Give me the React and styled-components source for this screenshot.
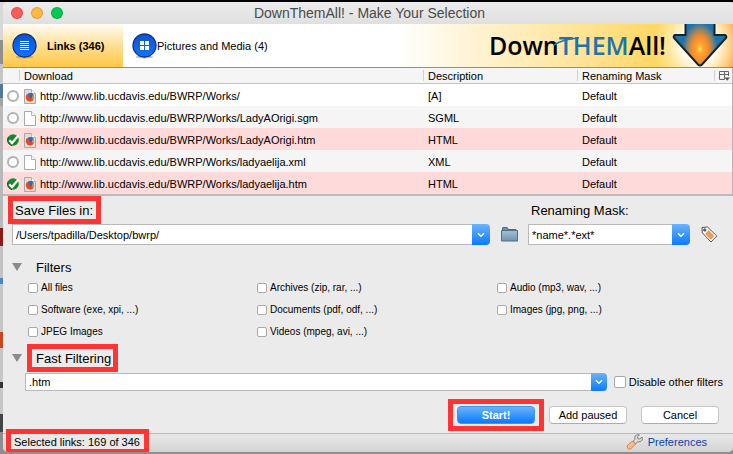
import React, { useState } from 'react';
import styled, { createGlobalStyle, css } from 'styled-components';

const GlobalStyle = createGlobalStyle`
  * {
    box-sizing: border-box;
  }
  body {
    margin: 0;
    background: #8e8e8e;
    font-family: "Liberation Sans", Arial, sans-serif;
    font-size: 11px;
    line-height: 16px;
    color: #000;
  }
  input,
  button {
    margin: 0;
    font: inherit;
    color: inherit;
  }
`;

const Desktop = styled.div`
  padding: 0 0 2px 3px;
  border-top: 2px solid #000;
  background: linear-gradient(
    #d8d8d8 0 38px, #8f8f8f 38px 62px, #c6c6c6 62px 82px, #55789a 82px 96px,
    #a4a4a4 96px 104px, #b9b9b9 104px 226px, #8b1a1a 226px 244px, #c2c2c2 244px 276px,
    #4c86c4 276px 282px, #c6c6c6 282px 330px, #c8471c 330px 346px, #c6c6c6 346px 380px,
    #333 380px 386px, #c6c6c6 386px 412px, #444 412px 430px, #8e8e8e 430px
  );
`;

const Window = styled.main`
  background: #ebebeb;
  border-radius: 5px;
  overflow: hidden;
`;

const TitleBar = styled.header`
  display: grid;
  grid-template-columns: 1fr auto 1fr;
  align-items: center;
  height: 22px;
  padding: 0 5px 0 8px;
  background: linear-gradient(#ececec, #e0e0e0);
`;

const Title = styled.h1`
  margin: 0;
  font-size: 14px;
  font-weight: 400;
  color: #4a4a4a;
`;

const Lights = styled.div`
  display: flex;
  gap: 8px;
`;

const Light = styled.button`
  width: 12px;
  height: 12px;
  padding: 0;
  border: 1px solid rgba(0, 0, 0, 0.12);
  border-radius: 50%;
  background: ${({ $color }) => $color};
`;

const TabBar = styled.div`
  display: flex;
  height: 44px;
  border-bottom: 1px solid #8f8f8f;
  background: #fff;
`;

const Tab = styled.button`
  display: flex;
  align-items: center;
  gap: ${({ $active }) => ($active ? '10px' : '0')};
  width: ${({ $active }) => ($active ? '120px' : 'auto')};
  padding: 0 9px;
  border: 0;
  background: transparent;
  white-space: nowrap;
  ${({ $active }) => $active && css`
    background: linear-gradient(#fffdf6, #ffdf94 50%, #ffc845);
    font-weight: 700;
  `}
`;

const Banner = styled.div`
  flex: 1;
  display: flex;
  justify-content: flex-end;
  align-items: center;
  gap: 6px;
  padding-right: 5px;
  background:
    radial-gradient(ellipse 46px 50px at calc(100% - 34px) 20px, #fffbe8 40%, rgba(255, 240, 190, 0.7) 65%, transparent),
    linear-gradient(to left, #ff8f22 0, #ffb03a 20px, transparent 60px),
    linear-gradient(to right, #fff 26%, #fff2cf 45%, #ffe394 68%, #ffd352 88%);
`;

const Logo = styled.strong`
  position: relative;
  font: 600 25px/43px "Open Sans", sans-serif;
  em {
    font-style: normal;
    color: #1a75b0;
  }
`;

const Swash = styled.svg`
  position: absolute;
  left: 64px;
  top: 12px;
`;

const LinkTable = styled.table`
  width: 100%;
  table-layout: fixed;
  border-collapse: separate;
  border-spacing: 0;
  background: #fff;
  border-right: 1px solid #b5b5b5;
  border-bottom: 2px solid #b9bbbc;
`;

const HeadCell = styled.th`
  width: ${({ $width }) => $width};
  height: 16px;
  padding: 1px 0 0 4px;
  border-bottom: 1px solid #c4c4c4;
  background: linear-gradient(to bottom, #d0d0d0, #d0d0d0) 100% 50% / 1px 11px no-repeat #f5f5f5;
  font-weight: 400;
  text-align: left;
  line-height: 14px;
  &:last-child {
    background: #f5f5f5;
  }
  svg {
    display: block;
  }
`;

const Row = styled.tr`
  height: 22px;
  background: ${({ $checked }) => ($checked ? '#ffdada' : '#fff')};
  &:nth-child(even) {
    background: ${({ $checked }) => ($checked ? '#ffdada' : '#f5f5f5')};
  }
`;

const Cell = styled.td`
  padding: 2px 0 0 4px;
  line-height: 20px;
  white-space: nowrap;
`;

const NameCell = styled.div`
  display: flex;
  align-items: center;
  gap: 4px;
`;

const Mark = styled.label`
  display: grid;
  place-items: center;
  width: 12px;
  height: 12px;
  > * {
    grid-area: 1 / 1;
  }
  svg {
    pointer-events: none;
  }
`;

const RoundCheck = styled.input`
  appearance: none;
  width: 12px;
  height: 12px;
  border: 2px solid #b2b2b2;
  border-radius: 50%;
  background: #fff;
  &:checked {
    border-color: transparent;
    background: transparent;
  }
`;

const Panel = styled.form`
  padding: 5px 14px 9px 9px;
`;

const SaveGrid = styled.div`
  display: grid;
  grid-template-columns: 1fr 16px 162px 16px;
  column-gap: 11px;
  row-gap: 5px;
  align-items: center;
  padding-right: 2px;
`;

const highlight = css`
  outline: 5px solid #ff3535;
`;

const FieldLabel = styled.label`
  justify-self: start;
  height: 18px;
  margin-left: 1px;
  padding: 0 3px 0 2px;
  font-size: 13px;
  line-height: 20px;
  ${({ $marked }) => $marked && highlight}
`;

const Combo = styled.div`
  display: flex;
  flex: 1;
  height: ${({ $small }) => ($small ? '18px' : '21px')};
`;

const ComboInput = styled.input`
  flex: 1;
  min-width: 0;
  padding: 0 3px;
  border: 1px solid #b9b9b9;
  border-right: 0;
  background: #fff;
  outline: 0;
`;

const ComboButton = styled.button`
  display: grid;
  place-items: center;
  width: ${({ $small }) => ($small ? '16px' : '18px')};
  padding: 0;
  border: 0;
  border-radius: 0 4px 4px 0;
  background: linear-gradient(#6cb3fa, #0a7aff);
`;

const IconButton = styled.button`
  display: grid;
  place-items: center;
  width: 16px;
  height: 18px;
  padding: 0;
  border: 0;
  background: transparent;
  svg {
    overflow: visible;
  }
`;

const SectionHead = styled.div`
  display: flex;
  align-items: center;
  gap: 10px;
  margin-top: ${({ $gap }) => $gap};
`;

const Disclosure = styled.button`
  width: 10px;
  height: 8px;
  padding: 0;
  border: 0;
  background: #8b8b8b;
  clip-path: polygon(0 0, 100% 0, 50% 100%);
`;

const SectionTitle = styled.h2`
  height: 18px;
  margin: 0;
  padding: 0 2px 0 4px;
  font-size: 13px;
  font-weight: 400;
  line-height: 20px;
  ${({ $marked }) => $marked && highlight}
`;

const FilterGrid = styled.div`
  display: grid;
  grid-template-columns: 229fr 240fr 222fr;
  margin-top: 1px;
  padding-left: 16px;
`;

const CheckLabel = styled.label`
  display: flex;
  align-items: center;
  gap: 3px;
  height: 22px;
  font-size: 10px;
  ${({ $large }) => $large && css`
    height: 18px;
    font-size: 11px;
  `}
`;

const Checkbox = styled.input`
  appearance: none;
  width: ${({ $large }) => ($large ? '12px' : '10px')};
  height: ${({ $large }) => ($large ? '12px' : '10px')};
  border: 1px solid #a9a9a9;
  border-radius: 2px;
  background: #fff;
  &:checked {
    background: #2c88f5;
  }
`;

const FastRow = styled.div`
  display: flex;
  gap: 7px;
  margin: 6px -4px 15px 13px;
`;

const Actions = styled.div`
  display: flex;
  justify-content: flex-end;
  align-items: center;
  gap: 14px;
`;

const PushButton = styled.button`
  display: block;
  width: 78px;
  height: 18px;
  padding: 0;
  border: 1px solid #c6c6c6;
  border-bottom-color: #adadad;
  border-radius: 4px;
  background: #fff;
  line-height: 16px;
  ${({ $primary }) => $primary && css`
    border-color: #3d96f7;
    background: linear-gradient(#6cb3fa, #0a7aff);
    color: #fff;
    font-weight: 700;
  `}
`;

const StartFrame = styled.div`
  margin: -2px -4px;
  padding: 2px 4px;
  ${highlight}
`;

const StatusBar = styled.footer`
  display: flex;
  justify-content: space-between;
  align-items: flex-start;
  height: 19px;
  padding: 0 26px 0 8px;
  border-top: 1px solid #b9b9b9;
  background: linear-gradient(#e9e9e9, #d3d3d3);
`;

const Status = styled.output`
  height: 15px;
  padding: 0 4px 0 3px;
  background: #e9e9e9;
  line-height: 17px;
  ${highlight}
`;

const PrefLink = styled.a`
  display: flex;
  align-items: center;
  gap: 5px;
  color: #0c3fae;
  text-decoration: none;
`;

const TabIcon = ({ id, children }) => (
  <svg width="25" height="26" viewBox="0 0 25 26" aria-hidden="true">
    <defs>
      <linearGradient id={id} x1="0" y1="0" x2="0" y2="1">
        <stop offset="0" stopColor="#0c53cf" />
        <stop offset="1" stopColor="#1273fa" />
      </linearGradient>
    </defs>
    <ellipse cx="12.5" cy="24" rx="9" ry="1.5" fill="#8a7a55" opacity="0.5" />
    <circle cx="12.5" cy="12.5" r="11.5" fill={`url(#${id})`} stroke="#0b3583" strokeWidth="1.3" />
    {children}
  </svg>
);

const ArrowLogo = () => (
  <svg width="56" height="43" viewBox="0 0 56 43" aria-hidden="true">
    <defs>
      <radialGradient id="arrow" gradientUnits="userSpaceOnUse" cx="28" cy="25" r="25" gradientTransform="translate(28 25) scale(.82 1.25) translate(-28 -25)">
        <stop offset="0" stopColor="#ffee4a" />
        <stop offset="0.14" stopColor="#ffa632" />
        <stop offset="0.42" stopColor="#f28a2c" />
        <stop offset="0.62" stopColor="#8f8468" />
        <stop offset="0.85" stopColor="#1d74ab" />
      </radialGradient>
    </defs>
    <path d="M13.5 -2V11H3Q1 12 2 14L26 40.5Q28 42.5 30 40.5L54 14Q55 12 53 11H42.5V-2Z" fill="url(#arrow)" stroke="#14232c" strokeWidth="2" />
  </svg>
);

const CheckIcon = () => (
  <svg width="12" height="12" viewBox="0 0 12 12" aria-hidden="true">
    <circle cx="6" cy="6" r="5.8" fill="#138a2c" />
    <path d="M1.2 3.6A5.8 5.8 0 0 0 5 11.7" fill="none" stroke="#07571a" strokeWidth="1" />
    <path d="M2.3 6.2L5 9L11.2 1.8" fill="none" stroke="#fff" strokeWidth="2.2" />
  </svg>
);

const FileIcon = ({ html }) => (
  <svg width="12" height="15" viewBox="0 0 12 15" aria-hidden="true">
    <path d="M.5 .5H7.5L11.5 4.5V14.5H.5Z" fill={html ? '#dedede' : '#fff'} stroke="#a9a9a9" />
    <path d="M7.5 .5V4.5H11.5" fill="#fff" stroke="#b5b5b5" />
    {html && (
      <>
        <circle cx="6" cy="8.2" r="4.2" fill="#e4572a" />
        <circle cx="6.8" cy="6.6" r="2.6" fill="#2d6db8" />
        <path d="M2 6Q3 8 5 7.5Q5.5 10 9.8 9.2Q8.5 12.4 5.5 12.3Q2 11.5 2 6Z" fill="#e5482b" />
        <path d="M9 5Q10.6 8 9 10.6L8.2 9Z" fill="#f8b32e" />
      </>
    )}
  </svg>
);

const ColumnPicker = () => (
  <svg width="12" height="12" viewBox="0 0 12 12" aria-hidden="true">
    <path d="M.5 1.5H9.5V6M.5 1.5V9.5H5.5M.5 4.5H9.5M5.5 1.5V9.5" fill="none" stroke="#666" />
    <path d="M5.5 7.5H11L8.2 10.8Z" fill="#555" />
  </svg>
);

const Chevron = () => (
  <svg width="8" height="6" viewBox="0 0 8 6" aria-hidden="true">
    <path d="M1 1.2L4 4.2L7 1.2" fill="none" stroke="#fff" strokeWidth="1.4" />
  </svg>
);

const FolderIcon = () => (
  <svg width="17" height="15" viewBox="0 0 17 15" aria-hidden="true">
    <defs>
      <linearGradient id="folder" x1="0" y1="0" x2="0" y2="1">
        <stop offset="0" stopColor="#a5c0d4" />
        <stop offset="1" stopColor="#6f93b1" />
      </linearGradient>
    </defs>
    <path d="M1.5 4V1Q1.5 .5 2 .5H6Q6.5 .5 6.8 1.5L7 2.5H15V4" fill="#6c8ea9" stroke="#4b6d88" />
    <path d="M.5 3.5H16.5V14H.5Z" fill="url(#folder)" stroke="#4e6f8a" />
  </svg>
);

const TagIcon = () => (
  <svg width="17" height="17" viewBox="0 0 17 17" aria-hidden="true">
    <path d="M1 1.5L6.5 1L15.8 10L10 16L1.3 6.8Z" fill="#fff" stroke="#555" strokeWidth="1" />
    <path d="M7.5 4.8L12.8 10L9.7 13.2L4.6 8Z" fill="#f39a4c" stroke="#d47a2c" strokeWidth=".6" />
    <circle cx="3.8" cy="4" r="1.3" fill="#777" stroke="#333" strokeWidth=".6" />
  </svg>
);

const WrenchIcon = () => (
  <svg width="17" height="16" viewBox="0 0 17 16" aria-hidden="true">
    <path d="M7.2 7.2L9.8 9.8L11.5 7.8Q14.5 8.5 16 6.2Q16.8 4.5 16 3L13.8 5L11.8 4.6L11.5 2.8L13.5 .8Q11 0 9.3 1.8Q8.2 3.3 9 5.3Z" fill="#ddd" stroke="#777" strokeWidth=".9" />
    <path d="M1.2 11.8L5.8 7.4Q8.5 7.2 9.4 10.2L4.6 15Q1.2 15.8 1.2 11.8Z" fill="#f9b98a" stroke="#dd7b3c" strokeWidth=".9" />
  </svg>
);

const ComboBox = ({ id, value, label, small }) => (
  <Combo $small={small}>
    <ComboInput id={id} type="text" defaultValue={value} aria-label={label} />
    <ComboButton type="button" aria-label="Show history" $small={small}>
      <Chevron />
    </ComboButton>
  </Combo>
);

const base = 'http://www.lib.ucdavis.edu/BWRP/Works/';

const initialLinks = [
  { url: base, type: '[A]', html: true, checked: false },
  { url: `${base}LadyAOrigi.sgm`, type: 'SGML', html: false, checked: false },
  { url: `${base}LadyAOrigi.htm`, type: 'HTML', html: true, checked: true },
  { url: `${base}ladyaelija.xml`, type: 'XML', html: false, checked: false },
  { url: `${base}ladyaelija.htm`, type: 'HTML', html: true, checked: true },
];

const filters = [
  'All files',
  'Archives (zip, rar, ...)',
  'Audio (mp3, wav, ...)',
  'Software (exe, xpi, ...)',
  'Documents (pdf, odf, ...)',
  'Images (jpg, png, ...)',
  'JPEG Images',
  'Videos (mpeg, avi, ...)',
];

export default function App() {
  const [links, setLinks] = useState(initialLinks);

  const toggle = (url) => {
    setLinks(links.map((link) => (link.url === url ? { ...link, checked: !link.checked } : link)));
  };

  return (
    <Desktop>
      <GlobalStyle />
      <Window>
        <TitleBar>
          <Lights>
            <Light $color="#fc5b57" aria-label="Close" />
            <Light $color="#fdb843" aria-label="Minimize" />
            <Light $color="#06c74f" aria-label="Zoom" />
          </Lights>
          <Title>DownThemAll! - Make Your Selection</Title>
        </TitleBar>

        <TabBar>
          <Tab type="button" $active>
            <TabIcon id="linksIcon">
              <path d="M8 8.5H17M8 10.5H17M8 12.5H17M8 14.5H17M8 16.5H17" stroke="#fff" />
            </TabIcon>
            Links (346)
          </Tab>
          <Tab type="button">
            <TabIcon id="mediaIcon">
              <path d="M8 8H12V12H8ZM13 8H17V12H13ZM8 13H12V17H8ZM13 13H17V17H13Z" fill="#fff" />
            </TabIcon>
            Pictures and Media (4)
          </Tab>
          <Banner>
            <Logo>
              Down<em>THEM</em>All!
              <Swash width="28" height="10" viewBox="0 0 28 10" aria-hidden="true">
                <path d="M1 9Q10 3 26 2" fill="none" stroke="#1a75b0" strokeWidth="1.6" />
              </Swash>
            </Logo>
            <ArrowLogo />
          </Banner>
        </TabBar>

        <LinkTable>
          <thead>
            <tr>
              <HeadCell $width="17px" aria-label="Selected" />
              <HeadCell>Download</HeadCell>
              <HeadCell $width="154px">Description</HeadCell>
              <HeadCell $width="137px">Renaming Mask</HeadCell>
              <HeadCell $width="17px" aria-label="Columns">
                <ColumnPicker />
              </HeadCell>
            </tr>
          </thead>
          <tbody>
            {links.map(({ url, type, html, checked }) => (
              <Row key={url} $checked={checked}>
                <Cell>
                  <Mark>
                    <RoundCheck type="checkbox" checked={checked} onChange={() => toggle(url)} aria-label={url} />
                    {checked && <CheckIcon />}
                  </Mark>
                </Cell>
                <Cell>
                  <NameCell>
                    <FileIcon html={html} />
                    {url}
                  </NameCell>
                </Cell>
                <Cell>{type}</Cell>
                <Cell colSpan="2">Default</Cell>
              </Row>
            ))}
          </tbody>
        </LinkTable>

        <Panel onSubmit={(e) => e.preventDefault()}>
          <SaveGrid>
            <FieldLabel htmlFor="folder-path" $marked>Save Files in:</FieldLabel>
            <span />
            <FieldLabel htmlFor="mask">Renaming Mask:</FieldLabel>
            <span />
            <ComboBox id="folder-path" value="/Users/tpadilla/Desktop/bwrp/" />
            <IconButton type="button" aria-label="Browse"><FolderIcon /></IconButton>
            <ComboBox id="mask" value="*name*.*ext*" />
            <IconButton type="button" aria-label="Insert tag"><TagIcon /></IconButton>
          </SaveGrid>

          <SectionHead $gap="13px">
            <Disclosure type="button" aria-label="Toggle filters" />
            <SectionTitle>Filters</SectionTitle>
          </SectionHead>
          <FilterGrid>
            {filters.map((name) => (
              <CheckLabel key={name}>
                <Checkbox type="checkbox" />
                {name}
              </CheckLabel>
            ))}
          </FilterGrid>

          <SectionHead $gap="6px">
            <Disclosure type="button" aria-label="Toggle fast filtering" />
            <SectionTitle $marked>Fast Filtering</SectionTitle>
          </SectionHead>
          <FastRow>
            <ComboBox id="fast-filter" value=".htm" label="Fast Filtering" small />
            <CheckLabel $large>
              <Checkbox type="checkbox" $large />
              Disable other filters
            </CheckLabel>
          </FastRow>

          <Actions>
            <StartFrame>
              <PushButton type="submit" $primary>Start!</PushButton>
            </StartFrame>
            <PushButton type="button">Add paused</PushButton>
            <PushButton type="button">Cancel</PushButton>
          </Actions>
        </Panel>

        <StatusBar>
          <Status>Selected links: 169 of 346</Status>
          <PrefLink href="#preferences">
            <WrenchIcon />
            Preferences
          </PrefLink>
        </StatusBar>
      </Window>
    </Desktop>
  );
}
